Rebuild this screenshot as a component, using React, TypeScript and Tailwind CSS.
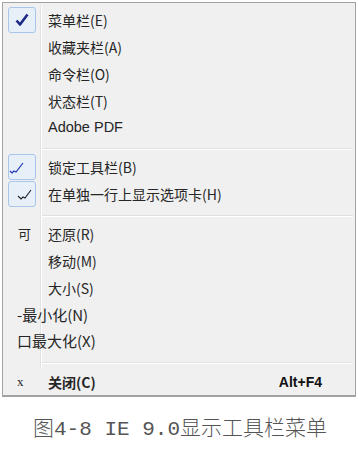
import React from 'react';

const menuFont = { fontFamily: '"Noto Sans CJK SC", "Liberation Sans", sans-serif' };

function CheckBox({ variant }: { variant: 'bold' | 'thin1' | 'thin2' }) {
  return (
    <div className="flex h-full w-full items-center justify-center">
      <div className="relative h-[26px] w-[28px] rounded-[3px] border border-[#a9c6ea] bg-[#e7eff9]">
        {variant === 'bold' && (
          <svg className="absolute left-[5px] top-[4px]" width="16" height="16" viewBox="0 0 16 16">
            <path d="M2.5 8.5 L6 12.5 L13.5 2.5" fill="none" stroke="#1d2a86" strokeWidth="2.6" strokeLinejoin="round" />
          </svg>
        )}
        {variant === 'thin1' && (
          <svg className="absolute left-[0px] top-[5px]" width="16" height="16" viewBox="0 0 16 16">
            <path d="M1 11 L3 13 L5 11 L7 12 L14 3" fill="none" stroke="#2234b8" strokeWidth="1.2" />
          </svg>
        )}
        {variant === 'thin2' && (
          <svg className="absolute left-[8px] top-[4px]" width="16" height="16" viewBox="0 0 16 16">
            <path d="M1 10 L4 13 L6 11 L8 12 L14 4" fill="none" stroke="#222" strokeWidth="1.1" />
          </svg>
        )}
      </div>
    </div>
  );
}

function Row({
  h,
  gutter,
  label,
  right,
  line = true,
  labelClass = '',
}: {
  h: string;
  gutter?: React.ReactNode;
  label?: React.ReactNode;
  right?: React.ReactNode;
  line?: boolean;
  labelClass?: string;
}) {
  return (
    <div className={`flex ${h}`}>
      <div
        className={`flex w-[38px] shrink-0 items-center overflow-visible whitespace-nowrap ${
          line ? 'border-r border-[#e2e2e2] shadow-[1px_0_0_#ffffff]' : ''
        }`}
      >
        {gutter}
      </div>
      <div className={`flex flex-1 items-center justify-between pl-[7px] pr-[33px] ${labelClass}`}>
        <span>{label}</span>
        {right}
      </div>
    </div>
  );
}

function Sep({ h, top }: { h: string; top: string }) {
  return (
    <div className={`flex ${h}`}>
      <div className="w-[38px] shrink-0 border-r border-[#e2e2e2] shadow-[1px_0_0_#ffffff]" />
      <div className={`flex-1 pl-[1px] pr-[2px] ${top}`}>
        <div className="h-px bg-[#e0e0e0]" />
        <div className="h-px bg-white" />
      </div>
    </div>
  );
}

export default function App() {
  return (
    <div className="h-[450px] w-[358px] bg-white pl-[2px] pt-[2px]">
      <div
        className="flex w-[354px] flex-col border border-b-2 border-[#a2a2a2] bg-[#f0f0f0] pt-[3px] text-[14px] leading-none text-[#262626]"
        style={menuFont}
      >
        <Row h="h-[27px]" gutter={<CheckBox variant="bold" />} label="菜单栏(E)" />
        <Row h="h-[27px]" label="收藏夹栏(A)" />
        <Row h="h-[27px]" label="命令栏(O)" />
        <Row h="h-[27px]" label="状态栏(T)" />
        <Row h="h-[27px]" label="Adobe PDF" labelClass="font-['Liberation_Sans'] text-[14.5px]" />
        <Sep h="h-[12px]" top="pt-[7px]" />
        <Row h="h-[27px]" gutter={<CheckBox variant="thin1" />} label="锁定工具栏(B)" />
        <Row h="h-[27px]" gutter={<CheckBox variant="thin2" />} label="在单独一行上显示选项卡(H)" />
        <Sep h="h-[13px]" top="pt-[8px]" />
        <Row
          h="h-[27px]"
          gutter={<span className="pl-[15px] text-[13px]">可</span>}
          label="还原(R)"
        />
        <Row h="h-[27px]" label="移动(M)" />
        <Row h="h-[27px]" label="大小(S)" />
        <Row h="h-[26px]" gutter={<span className="pl-[14px] text-[15px]">-最小化(N)</span>} />
        <Row h="h-[26px]" gutter={<span className="pl-[14px] text-[15px]">口最大化(X)</span>} />
        <Sep h="h-[15px]" top="pt-[9px]" />
        <Row
          h="h-[27px]"
          line={false}
          gutter={<span className="pl-[14px] font-['Liberation_Serif'] text-[13px]">x</span>}
          label={<span className="font-bold">关闭(C)</span>}
          right={<span className="font-['Liberation_Sans'] text-[14px] font-bold text-[#111]">Alt+F4</span>}
        />
      </div>
      <div
        className="mt-[19px] text-center text-[21px] font-light leading-[28px] text-[#555]"
        style={{ fontFamily: '"Liberation Mono", "Noto Sans CJK SC", monospace' }}
      >
        图4-8 IE 9.0显示工具栏菜单
      </div>
    </div>
  );
}
